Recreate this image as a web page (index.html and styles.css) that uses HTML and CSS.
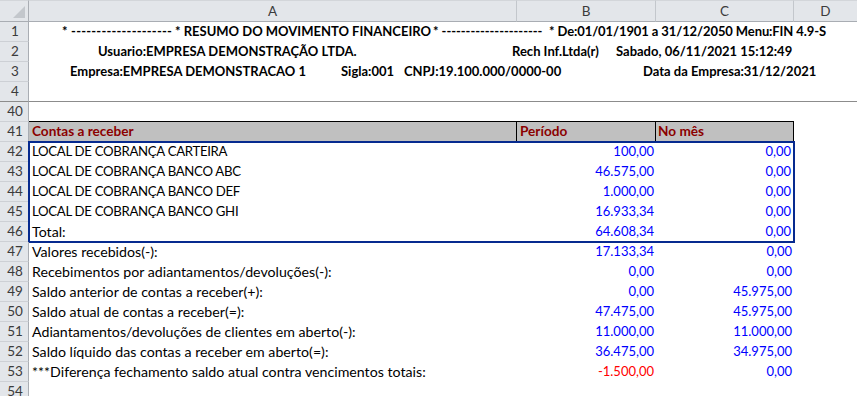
FILE: index.html
```html
<!DOCTYPE html>
<html lang="pt-BR">
<head>
<meta charset="utf-8">
<title>Resumo do Movimento Financeiro</title>
<link rel="stylesheet" href="styles.css">
</head>
<body>
<div class="sheet">
  <div class="row colrow">
    <div class="ch corner"><svg class="tri" width="12" height="12" viewBox="0 0 12 12"><polygon points="12,0 12,12 0,12" fill="#c3c7cc"/></svg></div>
    <div class="ch">A</div>
    <div class="ch">B</div>
    <div class="ch">C</div>
    <div class="ch chd">D</div>
  </div>

  <div class="row">
    <div class="rh">1</div>
    <div class="title r1">
      <span class="w113 dash">* --------------------</span>
      <span class="w258">* RESUMO DO MOVIMENTO FINANCEIRO</span>
      <span class="w116 dash2">* ---------------------</span>
      <span class="tight">* De:01/01/1901 a 31/12/2050 Menu:FIN 4.9-S</span>
    </div>
  </div>
  <div class="row">
    <div class="rh">2</div>
    <div class="title r2">
      <span class="w414">Usuario:EMPRESA DEMONSTRAÇÃO LTDA.</span>
      <span class="w104">Rech Inf.Ltda(r)</span>
      <span>Sabado, 06/11/2021 15:12:49</span>
    </div>
  </div>
  <div class="row">
    <div class="rh">3</div>
    <div class="title r3">
      <span class="w271">Empresa:EMPRESA DEMONSTRACAO 1</span>
      <span class="w63">Sigla:001</span>
      <span class="w239">CNPJ:19.100.000/0000-00</span>
      <span>Data da Empresa:31/12/2021</span>
    </div>
  </div>
  <div class="row freeze">
    <div class="rh">4</div>
    <div class="c"></div><div class="c"></div><div class="c"></div><div class="c"></div>
  </div>
  <div class="row">
    <div class="rh">40</div>
    <div class="c above"></div><div class="c above"></div><div class="c above"></div><div class="c"></div>
  </div>
  <div class="row">
    <div class="rh">41</div>
    <div class="c hd">Contas a receber</div>
    <div class="c hd hdb">Período</div>
    <div class="c hd hdc">No mês</div>
    <div class="c"></div>
  </div>

  <div class="block">
    <div class="rhstack">
      <div class="rh">42</div>
      <div class="rh">43</div>
      <div class="rh">44</div>
      <div class="rh">45</div>
      <div class="rh">46</div>
    </div>
    <div class="boxed">
      <div class="c lbl caps">LOCAL DE COBRANÇA CARTEIRA</div>
      <div class="c num">100,00</div>
      <div class="c num">0,00</div>

      <div class="c lbl caps">LOCAL DE COBRANÇA BANCO ABC</div>
      <div class="c num">46.575,00</div>
      <div class="c num">0,00</div>

      <div class="c lbl caps">LOCAL DE COBRANÇA BANCO DEF</div>
      <div class="c num">1.000,00</div>
      <div class="c num">0,00</div>

      <div class="c lbl caps">LOCAL DE COBRANÇA BANCO GHI</div>
      <div class="c num">16.933,34</div>
      <div class="c num">0,00</div>

      <div class="c lbl">Total:</div>
      <div class="c num">64.608,34</div>
      <div class="c num">0,00</div>
    </div>
    <div class="c"></div>
  </div>

  <div class="row">
    <div class="rh">47</div>
    <div class="c lbl">Valores recebidos(-):</div>
    <div class="c num">17.133,34</div>
    <div class="c num">0,00</div>
    <div class="c"></div>
  </div>
  <div class="row">
    <div class="rh">48</div>
    <div class="c lbl">Recebimentos por adiantamentos/devoluções(-):</div>
    <div class="c num">0,00</div>
    <div class="c num">0,00</div>
    <div class="c"></div>
  </div>
  <div class="row">
    <div class="rh">49</div>
    <div class="c lbl">Saldo anterior de contas a receber(+):</div>
    <div class="c num">0,00</div>
    <div class="c num">45.975,00</div>
    <div class="c"></div>
  </div>
  <div class="row">
    <div class="rh">50</div>
    <div class="c lbl">Saldo atual de contas a receber(=):</div>
    <div class="c num">47.475,00</div>
    <div class="c num">45.975,00</div>
    <div class="c"></div>
  </div>
  <div class="row">
    <div class="rh">51</div>
    <div class="c lbl">Adiantamentos/devoluções de clientes em aberto(-):</div>
    <div class="c num">11.000,00</div>
    <div class="c num">11.000,00</div>
    <div class="c"></div>
  </div>
  <div class="row">
    <div class="rh">52</div>
    <div class="c lbl">Saldo líquido das contas a receber em aberto(=):</div>
    <div class="c num">36.475,00</div>
    <div class="c num">34.975,00</div>
    <div class="c"></div>
  </div>
  <div class="row">
    <div class="rh">53</div>
    <div class="c lbl">***Diferença fechamento saldo atual contra vencimentos totais:</div>
    <div class="c num neg">-1.500,00</div>
    <div class="c num">0,00</div>
    <div class="c"></div>
  </div>
  <div class="row">
    <div class="rh">54</div>
    <div class="c"></div><div class="c"></div><div class="c"></div><div class="c"></div>
  </div>
</div>
</body>
</html>
```

FILE: styles.css
```css
* { box-sizing: border-box; }

html, body {
  margin: 0;
  padding: 0;
  background: #ffffff;
  overflow: hidden;
}

body {
  font-family: Lato, "Open Sans", "DejaVu Sans", sans-serif;
  font-size: 13px;
  color: #000;
}

.sheet {
  display: flex;
  flex-direction: column;
  width: 857px;
  height: 396px;
  overflow: hidden;
}

.row {
  display: grid;
  grid-template-columns: 29px 488px 139px 138px 1fr;
  height: 20px;
  flex: none;
}
.row.colrow { height: 22px; }

/* column headers */
.ch {
  background: #e3e6ea;
  border-top: 1px solid #d3d6da;
  border-right: 1px solid #c3c7cc;
  border-bottom: 1px solid #a9adb3;
  color: #3b3b3b;
  text-align: center;
  line-height: 20px;
  font-size: 13.5px;
}
.ch.corner {
  display: flex;
  align-items: flex-end;
  justify-content: flex-end;
  padding: 0 3px 3px 0;
  border-right-color: #a9adb3;
}
.ch.chd { border-right: 0; }
.tri { display: block; }

/* row headers */
.rh {
  background: #e3e6ea;
  border-right: 1px solid #a9adb3;
  border-bottom: 1px solid #cdd0d5;
  color: #3b3b3b;
  text-align: center;
  line-height: 19px;
  font-size: 13.5px;
  padding-left: 2px;
  height: 20px;
}

.c {
  line-height: 19px;
  white-space: nowrap;
  overflow: visible;
}

/* freeze pane line under row 4 */
.freeze > .rh,
.freeze > .c {
  border-bottom: 1px solid #8c8c8c;
}

/* title rows */
.title {
  grid-column: 2 / 6;
  display: flex;
  white-space: pre;
  font-weight: 700;
  line-height: 19px;
}
.title span { flex: none; }
.title .dash { letter-spacing: 0.2px; }
.title .dash2 { letter-spacing: -0.05px; }
.title .tight { letter-spacing: -0.1px; }
.r1 { padding-left: 33px; }
.r2 { padding-left: 69px; }
.r3 { padding-left: 41px; }
.w113 { width: 113px; }
.w258 { width: 258px; }
.w116 { width: 116px; }
.w414 { min-width: 414px; }
.w104 { min-width: 104px; }
.w271 { min-width: 271px; }
.w63 { min-width: 63px; }
.w239 { min-width: 239px; }

/* grey header row 41 */
.above { border-bottom: 1px solid #000; }
.hd {
  background: #c0c0c0;
  border-right: 1px solid #000;
  color: #8b0000;
  font-weight: 700;
  font-size: 13.6px;
  padding-left: 3px;
}
.hdb { padding-left: 3px; }
.hdc { padding-left: 2px; }

.lbl {
  padding-left: 3px;
  font-size: 14.2px;
}
.lbl.caps {
  font-size: 13.2px;
  letter-spacing: -0.3px;
}

.num {
  color: #0000ff;
  text-align: right;
  padding-right: 2px;
}
.num.neg { color: #ff0000; }

/* rows 42-46 with the medium blue outline round columns A-C */
.block {
  display: grid;
  grid-template-columns: 29px 765px 1fr;
  flex: none;
}
.rhstack {
  display: flex;
  flex-direction: column;
}
.boxed {
  display: grid;
  grid-template-columns: 488px 139px 138px;
  grid-auto-rows: 20px;
  outline: 2px solid #062a8f;
  outline-offset: -1px;
}
.boxed .num:nth-child(3n) { padding-right: 3px; }
```
